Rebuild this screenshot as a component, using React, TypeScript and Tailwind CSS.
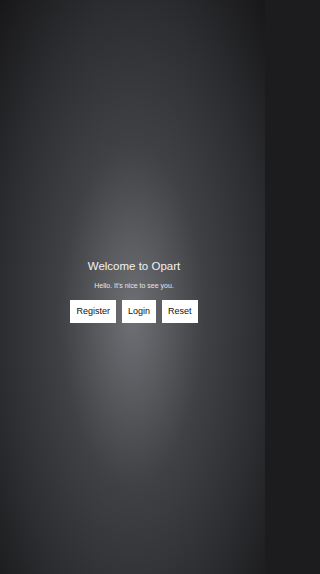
// Welcome screen — radial gray background with title, greeting and three actions
const actions = ['Register', 'Login', 'Reset'];

export default function App() {
  return (
    <div className="min-h-screen w-full bg-[#1c1c1e]">
      <div
        className="flex min-h-screen w-[265px] flex-col items-center justify-center pt-[8px] pl-[3px] bg-[radial-gradient(ellipse_at_50%_55%,#6e7075_0%,#5a5c60_17%,#404145_38%,#2c2d30_70%,#171719_100%)]"
        style={{ fontFamily: '"Liberation Sans", Arial, sans-serif' }}
      >
        <h1 className="text-[11.5px] leading-[14px] text-[#f2f2f2]">Welcome to Opart</h1>
        <p className="mt-[8px] text-[7px] leading-[9px] text-[#e6e6e6]">Hello. It's nice to see you.</p>
        <div className="mt-[10px] flex gap-[6px]">
          {actions.map((a) => (
            <button
              key={a}
              type="button"
              className="flex h-[23px] items-center bg-white px-[6px] text-[9px] text-[#111111]"
            >
              {a}
            </button>
          ))}
        </div>
      </div>
    </div>
  );
}
